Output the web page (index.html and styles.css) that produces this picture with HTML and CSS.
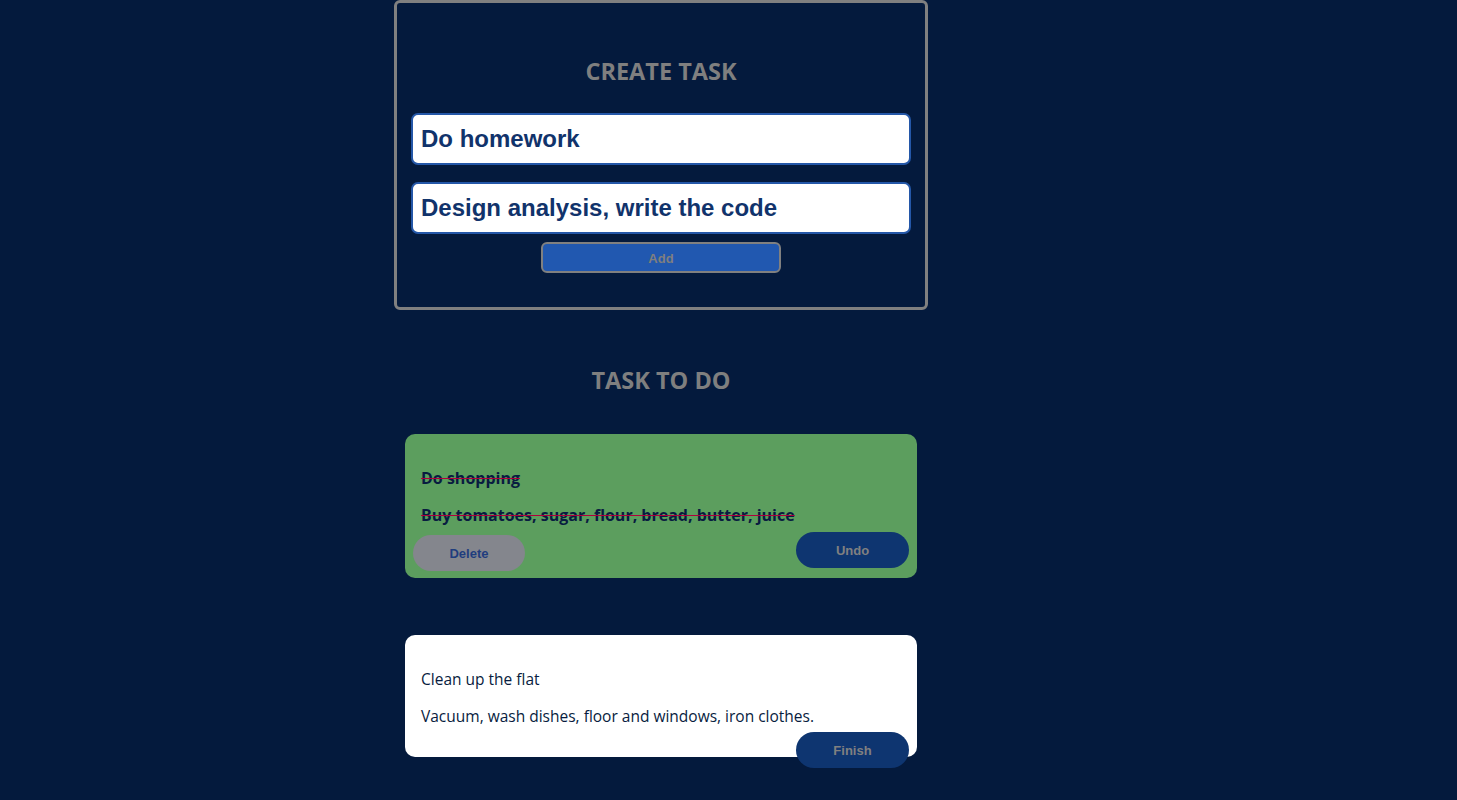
FILE: index.html
```html
<!DOCTYPE html>
<html>
<head>
<meta charset="utf-8">
<link rel="stylesheet" href="styles.css">
</head>
<body>
<div class="page">
  <form class="create">
    <h2 class="title">CREATE TASK</h2>
    <input class="field" type="text" value="Do homework">
    <input class="field" type="text" value="Design analysis, write the code">
    <button type="button" class="add">Add</button>
  </form>

  <h2 class="title list-title">TASK TO DO</h2>

  <div class="card done">
    <p class="name">Do shopping</p>
    <p class="desc">Buy tomatoes, sugar, flour, bread, butter, juice</p>
    <div class="actions">
      <button type="button" class="pill delete">Delete</button>
      <button type="button" class="pill primary undo">Undo</button>
    </div>
  </div>

  <div class="card todo">
    <p class="name">Clean up the flat</p>
    <p class="desc">Vacuum, wash dishes, floor and windows, iron clothes.</p>
    <div class="actions end">
      <button type="button" class="pill primary finish">Finish</button>
    </div>
  </div>
</div>
</body>
</html>
```

FILE: styles.css
```css
html, body {
  margin: 0;
  padding: 0;
  background: #041a3d;
  height: 100%;
}
body {
  font-family: "Open Sans", "Noto Sans", sans-serif;
}
.page {
  width: 534px;
  margin-left: 394px;
  display: flex;
  flex-direction: column;
  align-items: center;
}
.create {
  box-sizing: border-box;
  width: 534px;
  height: 310px;
  border: 3px solid #808080;
  border-radius: 6px;
  padding: 52px 14px 0;
  margin: 0;
  display: flex;
  flex-direction: column;
  align-items: center;
}
.title {
  margin: 0;
  height: 32px;
  line-height: 32px;
  font-size: 23.5px;
  font-weight: 700;
  color: #7f7f7f;
  text-align: center;
}
.field {
  box-sizing: border-box;
  width: 500px;
  height: 52px;
  border: 2px solid #2457a8;
  border-radius: 7px;
  background: #fff;
  padding: 0 8px;
  font-family: "Liberation Sans", Arial, sans-serif;
  font-weight: 700;
  font-size: 24px;
  color: #11336b;
  outline: none;
}
.create .title + .field { margin-top: 26px; }
.field + .field { margin-top: 17px; }
.add {
  box-sizing: border-box;
  margin-top: 8px;
  width: 240px;
  height: 31px;
  border: 2px solid #808080;
  border-radius: 6px;
  background: #2158b0;
  color: #7f7f7f;
  font-family: "Liberation Sans", Arial, sans-serif;
  font-weight: 700;
  font-size: 13px;
  padding-top: 2px;
}
.list-title {
  margin-top: 54px;
}
.card {
  box-sizing: border-box;
  width: 512px;
  border-radius: 10px;
  padding: 33px 8px 0;
  color: #081c40;
  font-size: 16px;
}
.done {
  margin-top: 38px;
  height: 144px;
  background: #5c9e5e;
}
.todo {
  margin-top: 57px;
  height: 122px;
  background: #fff;
  font-size: 15.5px;
}
.card p {
  margin: 0 8px;
  line-height: 22px;
}
.card .desc { margin-top: 15px; }
.done p {
  font-weight: 700;
  text-decoration: line-through;
  text-decoration-color: #b0003c;
}
.actions {
  display: flex;
  justify-content: space-between;
  align-items: flex-start;
  margin-top: 6px;
}
.actions.end { justify-content: flex-end; margin-top: 5px; }
.pill {
  box-sizing: border-box;
  width: 113px;
  height: 36px;
  border: none;
  border-radius: 18px;
  font-family: "Liberation Sans", Arial, sans-serif;
  font-weight: 700;
  font-size: 13px;
}
.delete {
  background: #84868d;
  color: #1f3d7e;
  margin-top: 3px;
  width: 112px;
}
.primary {
  background: #0e3570;
  color: #808080;
}
```
